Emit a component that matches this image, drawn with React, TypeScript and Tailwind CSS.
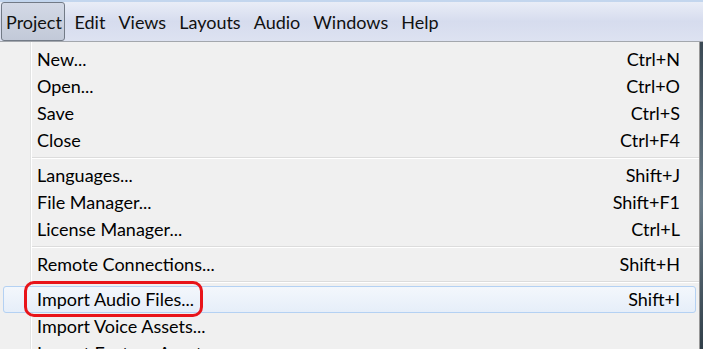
const menus = ['Project', 'Edit', 'Views', 'Layouts', 'Audio', 'Windows', 'Help'];

type Item = { label: string; keys?: string; sep?: boolean; active?: boolean; marked?: boolean };

const items: Item[] = [
  { label: 'New...', keys: 'Ctrl+N' },
  { label: 'Open...', keys: 'Ctrl+O' },
  { label: 'Save', keys: 'Ctrl+S' },
  { label: 'Close', keys: 'Ctrl+F4' },
  { label: '', sep: true },
  { label: 'Languages...', keys: 'Shift+J' },
  { label: 'File Manager...', keys: 'Shift+F1' },
  { label: 'License Manager...', keys: 'Ctrl+L' },
  { label: '', sep: true },
  { label: 'Remote Connections...', keys: 'Shift+H' },
  { label: '', sep: true },
  { label: 'Import Audio Files...', keys: 'Shift+I', active: true, marked: true },
  { label: 'Import Voice Assets...' },
  { label: 'Import Feature Assets...' },
];

function MenuRow({ item }: { item: Item }) {
  if (item.sep) {
    return (
      <div className="h-[8px] pl-[32px] pt-[3px]">
        <div className="h-px bg-[#dcdcdc]" />
        <div className="h-px bg-white" />
      </div>
    );
  }
  return (
    <div
      className={`flex h-[27px] items-center pr-[15px] mx-[3px] rounded-[3px] border ${
        item.active
          ? 'border-[#b4d1f3] bg-gradient-to-b from-[#f3f7fc] to-[#e6eef9]'
          : 'border-transparent'
      }`}
    >
      <div className="w-[29px] shrink-0" />
      <div className="relative pl-[4px]">
        {item.label}
        {item.marked && (
          <span className="absolute left-[-9px] right-[-9px] top-[-5px] bottom-[-4px] rounded-[10px] border-[3px] border-[#e8141a]" />
        )}
      </div>
      <div className="ml-auto">{item.keys}</div>
    </div>
  );
}

export default function App() {
  return (
    <div className="w-[703px] h-[349px] overflow-hidden bg-[#f0f0f0] text-[18px] text-black" style={{ fontFamily: 'Lato, "Liberation Sans", sans-serif' }}>
      <div className="h-[42px] border-t-2 border-[#c3d6ee] border-b border-b-[#a3a7ad] bg-gradient-to-b from-[#e9edf7] via-[#d6dcee] to-[#dde2f1] flex items-center">
        {menus.map((m, i) => (
          <div
            key={m}
            className={`h-[39px] flex items-center pt-[2px] text-[#111] ${
              i === 0
                ? 'ml-px w-[64px] pl-[4px] border border-[#727a86] rounded-[3px] bg-gradient-to-b from-[#d3d9e6] to-[#c2c9d8]'
                : i === 1
                  ? 'ml-[3px] px-[6.5px]'
                  : 'px-[6.5px]'
            }`}
          >
            {m}
          </div>
        ))}
      </div>
      <div className="flex">
        <div className="relative w-[700px] border-r border-[#979797] pt-[4px]">
          <div className="absolute left-[30px] top-0 bottom-0 w-[2px] flex">
            <div className="w-px bg-[#e2e3e3]" />
            <div className="w-px bg-white" />
          </div>
          <div className="relative">
            {items.map((it, i) => (
              <MenuRow key={i} item={it} />
            ))}
          </div>
        </div>
        <div className="flex-1 h-[320px] bg-gradient-to-b from-[#3b4a55] via-[#6a7c88] to-[#2c3a44]" />
      </div>
    </div>
  );
}
